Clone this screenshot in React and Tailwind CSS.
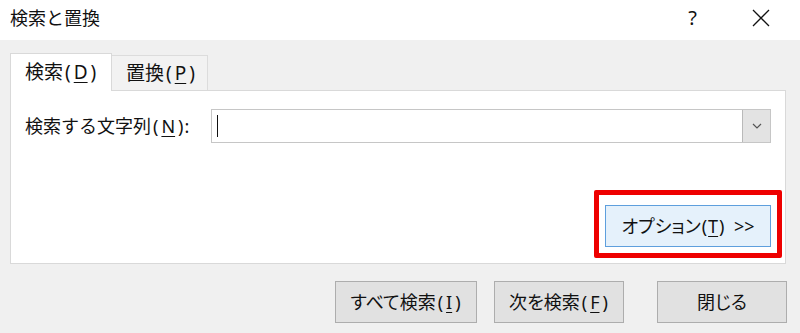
const FONT = "font-['Noto_Sans','Noto_Sans_CJK_JP',sans-serif]";

// mnemonic key like (D) with the wider paren spacing of the Windows UI font
function Key({ k, wide = true }) {
  return (
    <span className={wide ? 'ml-[2px] mr-[1px]' : 'ml-[1px]'}>
      (<u className={`underline-offset-[3px] ${wide ? 'mx-[3px]' : 'mx-[1px]'}`}>{k}</u>)
    </span>
  );
}

function Btn({ children, className = '' }) {
  return (
    <button
      className={`h-[42px] flex items-center justify-center bg-[#e1e1e1] border border-[#adadad] text-[18px] text-[#111] [font-feature-settings:'palt'] ${className}`}
    >
      {children}
    </button>
  );
}

export default function App() {
  return (
    <div className={`w-[800px] h-[333px] bg-[#f0f0f0] flex flex-col ${FONT} text-[#111] leading-none`}>
      {/* title bar */}
      <div className="h-[40px] bg-white flex items-center pl-[10px] pr-[30px]">
        <span className="text-[18px] -mt-[4px]">検索と置換</span>
        <span className="ml-auto text-[20px] -mt-[4px] mr-[55px]">?</span>
        <svg width="18" height="18" viewBox="0 0 18 18" className="-mt-[4px]">
          <path d="M1 1 L17 17 M17 1 L1 17" stroke="#111" strokeWidth="1.3" fill="none" />
        </svg>
      </div>

      <div className="px-[10px] pt-[13px]">
        {/* tabs */}
        <div className="flex items-end h-[38px] relative z-10 -mb-px">
          <div className="w-[102px] h-[38px] bg-white border border-b-0 border-[#d9d9d9] flex items-center pl-[14px] text-[19px]">
            検索<Key k="D" />
          </div>
          <div className="w-[96px] h-[35px] mb-px bg-[#f2f2f2] border border-l-0 border-b-0 border-[#dcdcdc] flex items-center pl-[14px] text-[19px]">
            置換<Key k="P" />
          </div>
        </div>

        {/* panel */}
        <div className="w-[776px] h-[174px] bg-white border border-[#d9d9d9] flex flex-col">
          <div className="flex items-center pl-[14px] pr-[14px] mt-[18px] h-[34px]">
            <span className="text-[18px] w-[186px]">
              検索する文字列<Key k="N" />:
            </span>
            <div className="flex-1 h-[34px] flex border border-[#c6c6c6]">
              <div className="flex-1 flex items-center pl-[5px]">
                <div className="w-px h-[22px] bg-[#111]" />
              </div>
              <div className="w-[28px] h-full bg-[#e3e3e3] border-l border-[#b9b9b9] flex items-center justify-center">
                <svg width="10" height="6" viewBox="0 0 10 6">
                  <path d="M1 1 L5 5 L9 1" stroke="#555" strokeWidth="1.2" fill="none" />
                </svg>
              </div>
            </div>
          </div>

          <div className="flex justify-end pr-[3px] mt-[47px]">
            <div className="w-[188px] h-[68px] border-[5px] border-[#ee0000] rounded-[2px] pt-[10px] pb-[6px] px-[6px]">
              <button className="w-full h-full bg-[#e5f1fb] border border-[#5e9fdd] flex items-center justify-center text-[18px] [font-feature-settings:'palt']">
                オプション<Key k="T" wide={false} />&nbsp; &gt;&gt;
              </button>
            </div>
          </div>
        </div>
      </div>

      {/* bottom buttons */}
      <div className="flex justify-end pr-[13px] mt-[17px]">
        <Btn className="w-[142px]">
          すべて検索<Key k="I" />
        </Btn>
        <Btn className="w-[130px] ml-[17px] border-[#0078d7]">
          次を検索<Key k="F" />
        </Btn>
        <Btn className="w-[130px] ml-[33px]">閉じる</Btn>
      </div>
    </div>
  );
}
